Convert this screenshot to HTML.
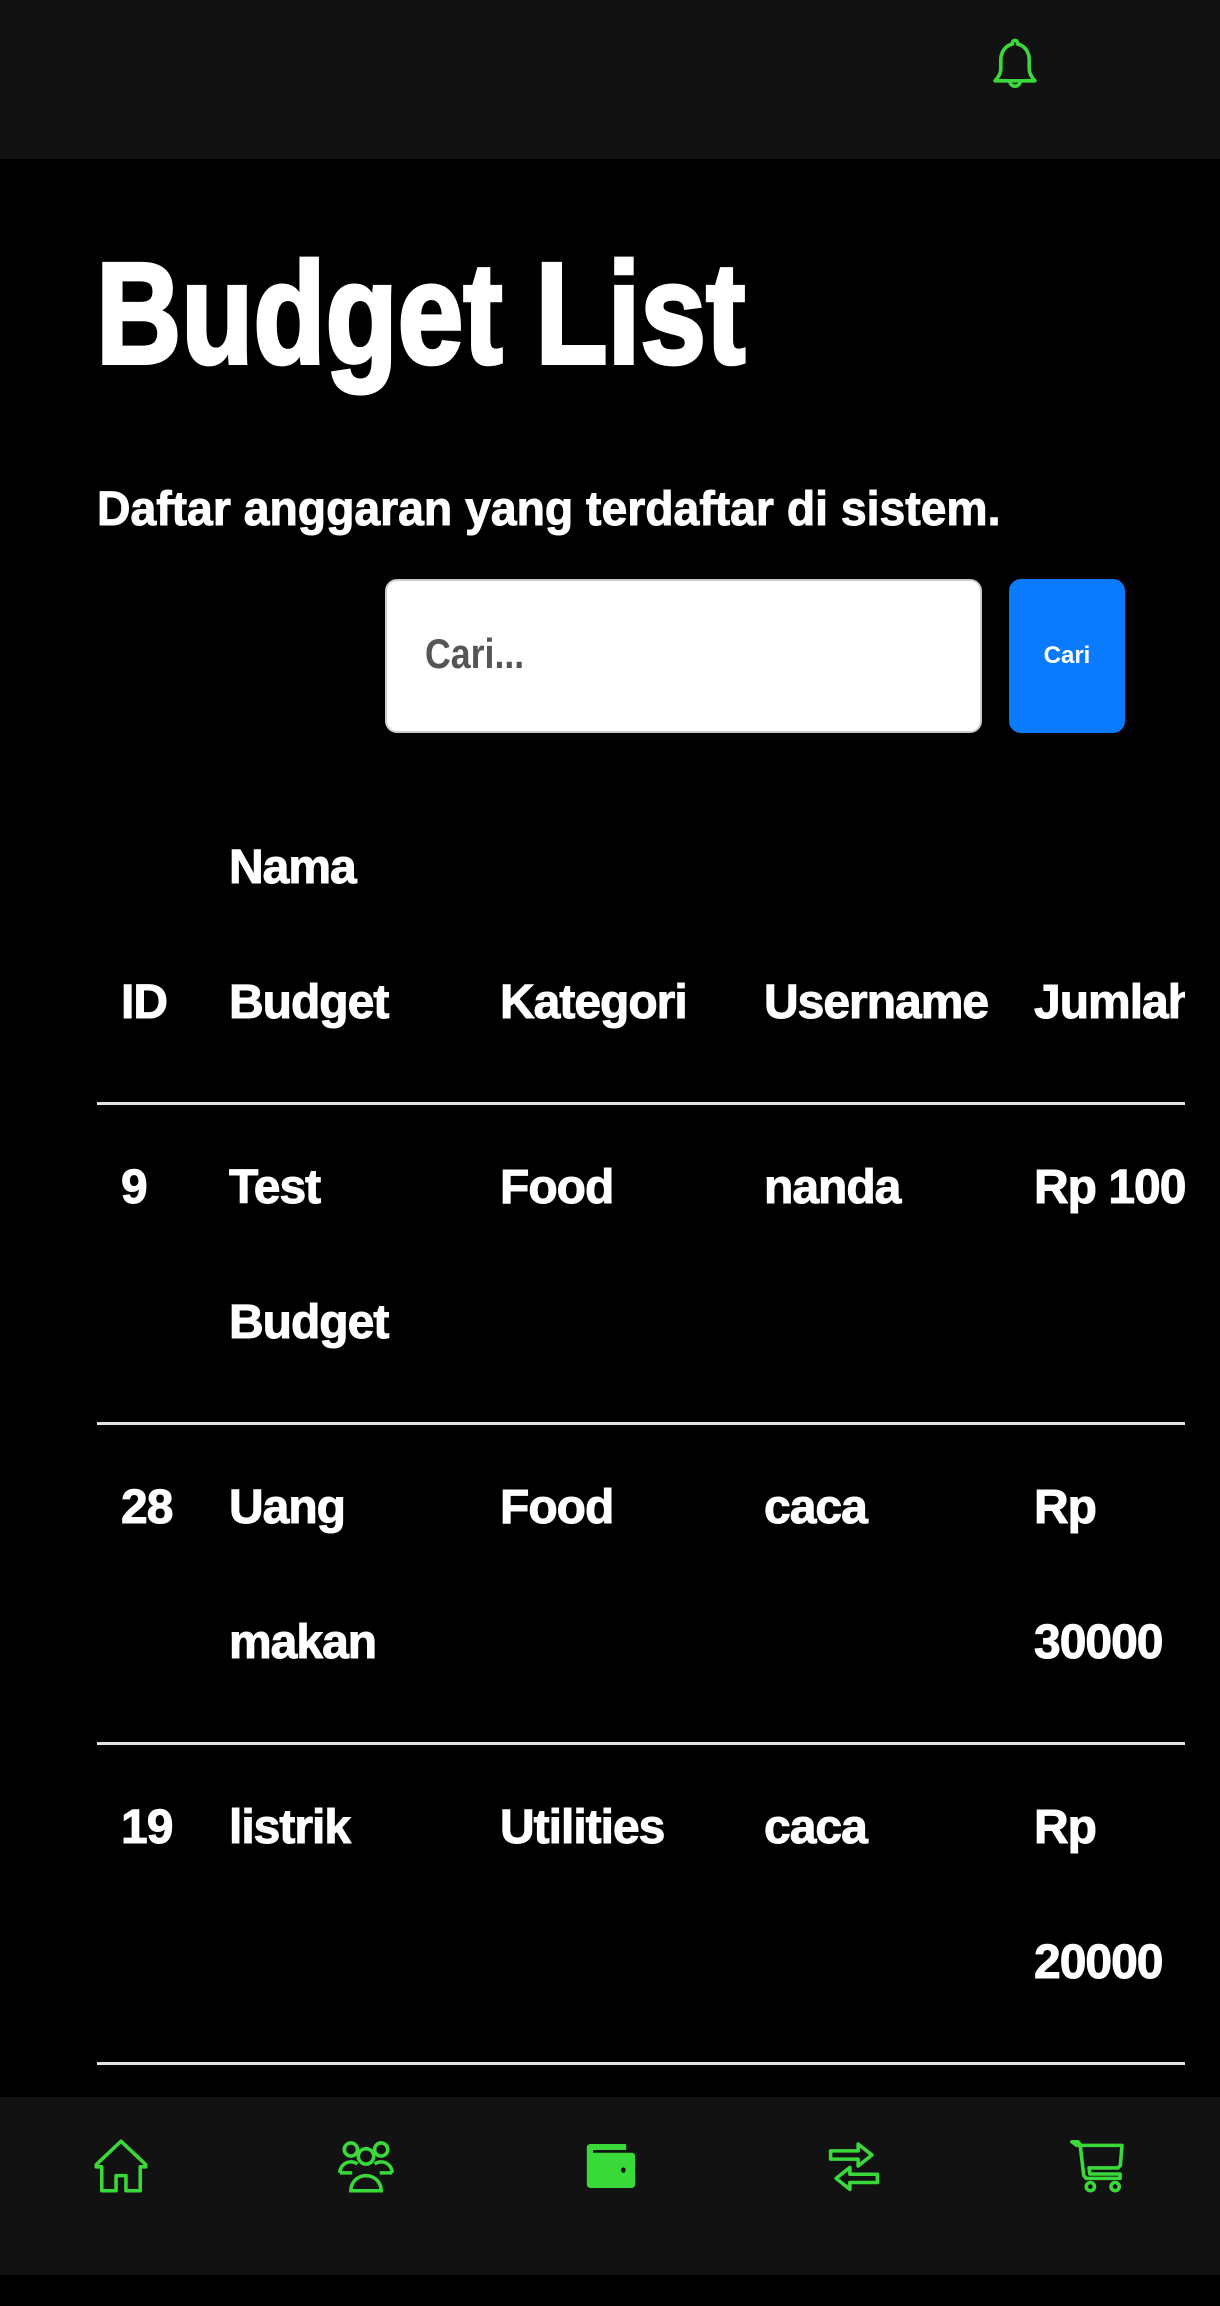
<!DOCTYPE html>
<html><head><meta charset="utf-8">
<style>
html,body{margin:0;padding:0;background:#000;}
body{width:1220px;height:2306px;position:relative;overflow:hidden;font-family:"Liberation Sans Narrow","Liberation Sans",sans-serif;font-weight:bold;color:#fff;}
.top{position:absolute;left:0;top:0;width:1220px;height:159px;background:#121212;}
.bell{position:absolute;left:984px;top:34px;}
h1{position:absolute;left:96px;top:234px;margin:0;font-size:144px;line-height:160px;white-space:nowrap;transform:scaleX(0.82);transform-origin:left top;-webkit-text-stroke:4px #fff;}
.sub{position:absolute;left:97px;top:480px;margin:0;font-size:48px;line-height:60px;white-space:nowrap;transform:scaleX(0.965);transform-origin:left top;-webkit-text-stroke:1px #fff;}
.inp{position:absolute;left:385px;top:579px;width:597px;height:154px;background:#fff;border:2px solid #ccc;border-radius:12px;box-sizing:border-box;}
.inp span{position:absolute;left:38px;top:48px;font-size:42px;line-height:50px;color:#555;display:inline-block;transform:scaleX(0.85);transform-origin:left top;}
.btn{position:absolute;left:1009px;top:579px;width:116px;height:154px;background:#0a7bff;border-radius:12px;color:#fff;font-size:24px;text-align:center;line-height:154px;}
.tw{position:absolute;left:97px;top:785px;width:1088px;height:1281px;overflow:hidden;}
table{border-collapse:collapse;width:1200px;table-layout:fixed;}
td,th{font-size:48px;line-height:135px;padding:15px 0 32px 24px;text-align:left;vertical-align:top;font-weight:bold;white-space:nowrap;letter-spacing:-1px;-webkit-text-stroke:1px #fff;}
th{vertical-align:bottom;}
tr{border-bottom:3px solid #e0e0e0;}
.nav{position:absolute;left:0;top:2097px;width:1220px;height:178px;background:#121212;}
.nav svg{position:absolute;top:36px;}
</style></head><body>
<div class="top">
<svg class="bell" width="62" height="62" viewBox="0 0 24 24" fill="none" stroke="#3ad93a" stroke-width="1.4" stroke-linejoin="round"><path d="M12 2.5c-.6 0-1 .4-1 1v.4C8.2 4.5 6.5 7 6.5 10v3.5c0 1.6-1 3.3-2.2 4.6h15.4c-1.2-1.3-2.2-3-2.2-4.6V10c0-3-1.7-5.5-4.5-6.1v-.4c0-.6-.4-1-1-1z"/><path d="M10 18.2a2 2 0 0 0 4 0"/></svg>
</div>
<h1>Budget List</h1>
<p class="sub">Daftar anggaran yang terdaftar di sistem.</p>
<div class="inp"><span>Cari...</span></div>
<div class="btn">Cari</div>
<div class="tw"><table>
<colgroup><col style="width:108px"><col style="width:271px"><col style="width:264px"><col style="width:270px"><col style="width:287px"></colgroup>
<tr><th>ID</th><th>Nama<br>Budget</th><th>Kategori</th><th>Username</th><th>Jumlah</th></tr>
<tr><td>9</td><td>Test<br>Budget</td><td>Food</td><td>nanda</td><td>Rp 100</td></tr>
<tr><td>28</td><td>Uang<br>makan</td><td>Food</td><td>caca</td><td>Rp<br>30000</td></tr>
<tr><td>19</td><td>listrik</td><td>Utilities</td><td>caca</td><td>Rp<br>20000</td></tr>
</table></div>
<div class="nav">
<svg style="left:88px" width="66" height="66" viewBox="0 0 24 24" fill="none" stroke="#3ad93a" stroke-width="1.3" stroke-linejoin="round"><path d="M3 11.5L12 3l9 8.5v.8h-2V21h-5.2v-5.5h-3.6V21H5v-8.7H3z"/></svg>
<svg style="left:333px" width="66" height="66" viewBox="0 0 24 24" fill="none" stroke="#3ad93a" stroke-width="1.3"><circle cx="6.5" cy="6" r="2.4"/><circle cx="17.5" cy="6" r="2.4"/><circle cx="12" cy="8.5" r="2.8"/><path d="M2.5 14.5c0-2.3 1.8-4 4-4 1 0 1.8.3 2.4.8M21.5 14.5c0-2.3-1.8-4-4-4-1 0-1.8.3-2.4.8M2.5 14.5h4.5M17 14.5h4.5"/><path d="M6.5 21c0-3.2 2.5-5.5 5.5-5.5s5.5 2.3 5.5 5.5z"/></svg>
<svg style="left:578px" width="66" height="66" viewBox="0 0 24 24"><path fill="#3ad93a" d="M4.5 4h13v2.2H5.5v1H19.5c.8 0 1.3.6 1.3 1.3v10.2c0 .7-.5 1.3-1.3 1.3h-15c-.7 0-1.3-.6-1.3-1.3V5.3C3.2 4.6 3.8 4 4.5 4z"/><ellipse cx="16.5" cy="13.5" rx="0.8" ry="1" fill="#121212"/></svg>
<svg style="left:821px" width="66" height="66" viewBox="0 0 24 24" fill="none" stroke="#3ad93a" stroke-width="1.3" stroke-linejoin="round"><path d="M3.5 6.5h10V4l5 4-5 4V9.5h-10z"/><path d="M20.5 15h-10v-2.5l-5 4 5 4V18h10z"/></svg>
<svg style="left:1067px" width="66" height="66" viewBox="0 0 24 24" fill="none" stroke="#3ad93a" stroke-width="1.3" stroke-linejoin="round"><path d="M1.8 3.2h2.2l1 1.3H20l-.6 7.3-.9.9H8l.3 2.2h11v1.6H7l-.9-1-1.3-10.9-1.3-.1z"/><circle cx="8.5" cy="19.5" r="1.5"/><circle cx="17.5" cy="19.5" r="1.5"/></svg>
</div>
</body></html>
